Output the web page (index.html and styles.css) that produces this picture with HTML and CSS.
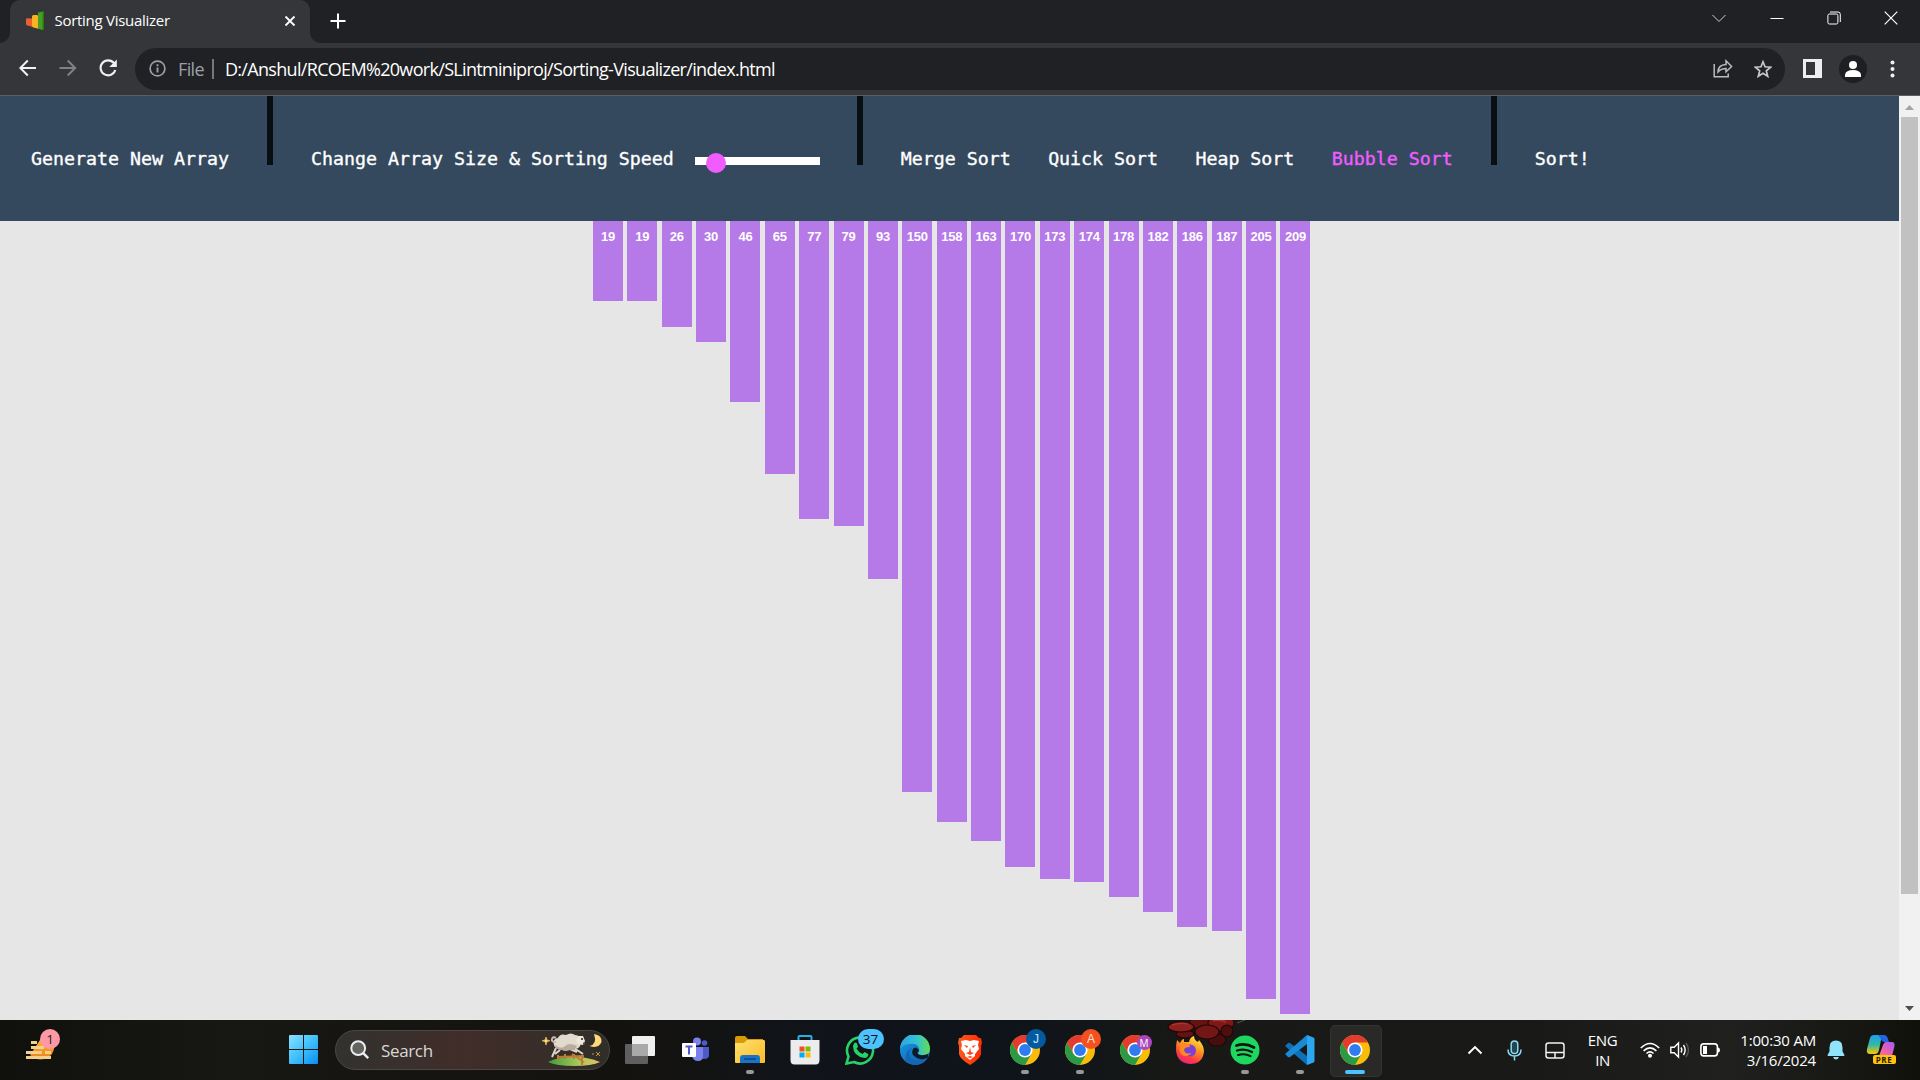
FILE: index.html
```html
<!DOCTYPE html>
<html lang="en">
<head>
<meta charset="utf-8">
<title>Sorting Visualizer</title>
<link rel="stylesheet" href="styles.css">
</head>
<body>
<svg class="defs" width="0" height="0" aria-hidden="true">
  <defs>
    <linearGradient id="win" x1="0" y1="0" x2="1" y2="1"><stop offset="0" stop-color="#8be0ff"/><stop offset=".5" stop-color="#3fc0fb"/><stop offset="1" stop-color="#0a8cf5"/></linearGradient>
    <linearGradient id="moon" x1="0" y1="0" x2="0" y2="1"><stop offset="0" stop-color="#ffc12e"/><stop offset="1" stop-color="#ee7d1b"/></linearGradient>
    <linearGradient id="hill" x1="0" x2="1"><stop offset="0" stop-color="#3f9b3c"/><stop offset=".6" stop-color="#a9c85a"/><stop offset="1" stop-color="#e3c06a"/></linearGradient>
    <linearGradient id="folder" x1="0" y1="0" x2="1" y2="1"><stop offset="0" stop-color="#ffdf70"/><stop offset="1" stop-color="#fbbc24"/></linearGradient>
    <linearGradient id="edgeA" x1="0" y1="0" x2="1" y2="0"><stop offset="0" stop-color="#2aa5e6"/><stop offset=".55" stop-color="#35c1d4"/><stop offset="1" stop-color="#62dc52"/></linearGradient>
    <linearGradient id="edgeB" x1="0" y1="0" x2="1" y2="1"><stop offset="0" stop-color="#1b9de2"/><stop offset="1" stop-color="#0f56a8"/></linearGradient>
    <linearGradient id="brave" x1="0" x2="1"><stop offset="0" stop-color="#ff5a1f"/><stop offset="1" stop-color="#ff2a00"/></linearGradient>
    <linearGradient id="fox" x1=".8" y1="0" x2=".3" y2="1"><stop offset="0" stop-color="#fff04a"/><stop offset=".4" stop-color="#ff9a1f"/><stop offset=".75" stop-color="#ff3d3d"/><stop offset="1" stop-color="#e81e8c"/></linearGradient>
    <linearGradient id="copA" x1="0" y1="0" x2="0" y2="1"><stop offset="0" stop-color="#1e9df5"/><stop offset=".5" stop-color="#2fb8a6"/><stop offset="1" stop-color="#ffc600"/></linearGradient>
    <linearGradient id="copB" x1="1" y1="0" x2="0" y2="1"><stop offset="0" stop-color="#a35df2"/><stop offset=".6" stop-color="#ea5fb3"/><stop offset="1" stop-color="#ff7d5c"/></linearGradient>
    <symbol id="chrome" viewBox="0 0 30 30">
      <circle cx="15" cy="15" r="15" fill="#fbbc09"/>
      <path d="M15 15 8.500 18.750 2.010 7.500A15 15 0 0 0 15 30L21.500 18.750Z" fill="#2a9a47"/>
      <path d="M15 15V7.500H28A15 15 0 0 0 2.010 7.500L8.500 18.750Z" fill="#e33b2e"/>
      <circle cx="15" cy="15" r="7.600" fill="#fff"/><circle cx="15" cy="15" r="5.900" fill="#2f7bf0"/>
    </symbol>
  </defs>
</svg>

<header class="tabstrip">
  <div class="tab">
    <svg class="favicon" width="20" height="20" viewBox="0 0 20 20"><path d="M1 8.500Q1 7 2.500 7.200L7 7.500v8.300l-4.500-1.300Q1 14 1 13z" fill="#ee5f2b"/><path d="M7 5.500Q7 4 8.500 4H12l1.500 1v12.800l-5-1.300Q7 16 7 15z" fill="#f9b223"/><path d="M13 1.500 18 .5q1 0 1 1V18l-1.500 1-4.500-1.500z" fill="#42a11e"/><path d="M17.500 1 19 1.500V18l-1.500 1z" fill="#2b7a10"/></svg>
    <span class="tab-title">Sorting Visualizer</span>
    <svg class="tab-close" width="12" height="12" viewBox="0 0 12 12"><path d="M1.500 1.500l9 9m0-9l-9 9" stroke="#fff" stroke-width="1.800"/></svg>
  </div>
  <svg class="new-tab" width="16" height="16" viewBox="0 0 16 16"><path d="M8 .5v15M.5 8h15" stroke="#fff" stroke-width="2"/></svg>
  <div class="window-buttons">
    <svg width="14" height="14" viewBox="0 0 14 14"><path d="M.5 4 7 10.500 13.500 4" fill="none" stroke="#cfcfcf"/></svg>
    <svg width="14" height="14" viewBox="0 0 14 14"><path d="M.5 7.500h13" stroke="#fff"/></svg>
    <svg width="14" height="14" viewBox="0 0 14 14" fill="none" stroke="#fff"><rect x=".9" y="3" width="10" height="10" rx="1.500"/><path d="M3 1h8q2.300 0 2.300 2.300V11"/></svg>
    <svg width="14" height="14" viewBox="0 0 14 14"><path d="M.7.7l12.600 12.600m0-12.600L.7 13.300" stroke="#fff" stroke-width="1.200"/></svg>
  </div>
</header>

<div class="toolbar">
  <div class="nav-icons">
    <svg width="18" height="18" viewBox="0 0 18 18" fill="none" stroke="#f0f1f3" stroke-width="2"><path d="M17 9H1.500M8.800 1.500 1.300 9l7.500 7.500"/></svg>
    <svg width="18" height="18" viewBox="0 0 18 18" fill="none" stroke="#808185" stroke-width="2"><path d="M.5 9H16M8.700 1.500 16.200 9l-7.500 7.500"/></svg>
    <svg width="18" height="18" viewBox="0 0 18 18"><path d="M15 4.200A7.500 7.500 0 1 0 16.300 11" fill="none" stroke="#f0f1f3" stroke-width="2.100"/><path d="M17.800.5V8h-7.500z" fill="#f0f1f3"/></svg>
  </div>
  <div class="omnibox">
    <svg width="17" height="17" viewBox="0 0 17 17"><circle cx="8.500" cy="8.500" r="7.400" fill="none" stroke="#9aa0a6" stroke-width="1.700"/><path d="M8.500 7.500v5M8.500 4.300v2" stroke="#9aa0a6" stroke-width="1.900"/></svg>
    <span class="scheme">File</span>
    <span class="omni-sep"></span>
    <span class="url">D:/Anshul/RCOEM%20work/SLintminiproj/Sorting-Visualizer/index.html</span>
    <svg class="share" width="20" height="19" viewBox="0 0 20 19" fill="none" stroke="#b9bbbe" stroke-width="1.500"><path d="M1.200 5v12.800h14V14.500"/><path d="M5 13q0-7 8-7.500V1.800L18.600 7.500 13 12.800V9.500Q8 9.500 5 13z"/></svg>
    <svg width="18" height="18" viewBox="0 0 18 18"><path d="M9 1.800 11 6.800l5.600.4-4.300 3.600 1.400 5.500L9 13.300l-4.700 3 1.400-5.500L1.400 7.200 7 6.800z" fill="none" stroke="#c6c8ca" stroke-width="1.700"/></svg>
  </div>
  <svg class="side-panel" width="19" height="19" viewBox="0 0 19 19"><path fill="#eceef0" d="M0 0h19v19H0zM3 3v13h9V3z" fill-rule="evenodd"/></svg>
  <svg class="avatar" width="28" height="28" viewBox="0 0 28 28"><circle cx="14" cy="14" r="14" fill="#1e1f22"/><circle cx="14" cy="10" r="4" fill="#fff"/><path d="M6 22v-2.500q1-4.500 8-4.500t8 4.500V22z" fill="#fff"/></svg>
  <svg class="kebab" width="5" height="18" viewBox="0 0 5 18" fill="#f0f1f3"><circle cx="2.500" cy="2.500" r="2"/><circle cx="2.500" cy="9" r="2"/><circle cx="2.500" cy="15.500" r="2"/></svg>
</div>

<div class="viewport">
  <main class="page">
    <nav class="navbar">
      <span class="nav-item">Generate New Array</span>
      <span class="divider"></span>
      <span class="nav-item">Change Array Size &amp; Sorting Speed</span>
      <div class="slider"><span class="thumb"></span></div>
      <span class="divider"></span>
      <div class="algorithms">
        <span class="nav-item">Merge Sort</span>
        <span class="nav-item">Quick Sort</span>
        <span class="nav-item">Heap Sort</span>
        <span class="nav-item selected">Bubble Sort</span>
      </div>
      <span class="divider"></span>
      <span class="nav-item">Sort!</span>
    </nav>
    <div class="bars">
      <div class="bar" style="--v:19">19</div>
      <div class="bar" style="--v:19">19</div>
      <div class="bar" style="--v:26">26</div>
      <div class="bar" style="--v:30">30</div>
      <div class="bar" style="--v:46">46</div>
      <div class="bar" style="--v:65">65</div>
      <div class="bar" style="--v:77">77</div>
      <div class="bar" style="--v:79">79</div>
      <div class="bar" style="--v:93">93</div>
      <div class="bar" style="--v:150">150</div>
      <div class="bar" style="--v:158">158</div>
      <div class="bar" style="--v:163">163</div>
      <div class="bar" style="--v:170">170</div>
      <div class="bar" style="--v:173">173</div>
      <div class="bar" style="--v:174">174</div>
      <div class="bar" style="--v:178">178</div>
      <div class="bar" style="--v:182">182</div>
      <div class="bar" style="--v:186">186</div>
      <div class="bar" style="--v:187">187</div>
      <div class="bar" style="--v:205">205</div>
      <div class="bar" style="--v:209">209</div>
    </div>
  </main>
  <aside class="scrollbar">
    <svg width="21" height="21" viewBox="0 0 21 21"><path d="M6 14l4.500-5 4.500 5z" fill="#a3a3a3"/></svg>
    <span class="scroll-thumb"></span>
    <svg width="21" height="21" viewBox="0 0 21 21"><path d="M6 7l4.500 5L15 7z" fill="#505050"/></svg>
  </aside>
</div>

<footer class="taskbar">
  <div class="weather">
    <svg width="34" height="36" viewBox="0 0 34 36"><path d="M16 8q8-2 12 3 2 12-5 17-10 6-19-2z" fill="url(#moon)"/><path d="M5 13.500h6M5 18.500h13M0 23.500h16M19 23.500h6M0 28.500h25" stroke="#f0d28c" stroke-width="2.800"/></svg>
    <span class="badge badge-pink">1</span>
  </div>
  <svg class="start" width="30" height="30" viewBox="0 0 30 30" fill="url(#win)"><path d="M0 1q0-1 1-1h13v14H0zM15 0h13q1 0 1 1v13H15zM0 15h14v14H1q-1 0-1-1zM15 15h14v13q0 1-1 1H15z"/></svg>
  <div class="search">
    <svg width="20" height="20" viewBox="0 0 20 20"><circle cx="8.200" cy="8.200" r="6.900" fill="#63635f" stroke="#e9eef2" stroke-width="2"/><path d="M13.200 13.200l5 5" stroke="#e9eef2" stroke-width="2.500"/></svg>
    <span>Search</span>
    <svg class="sheep" width="60" height="34" viewBox="0 0 60 34">
      <path d="M6 29q24-11 52 0-8 4-26 4T6 29z" fill="url(#hill)"/>
      <path d="M16 27v-5M23 26v-5M32 26v-5M40 32v-9M16 24l26-1M30 21l12 8" stroke="#c07a37" stroke-width="2"/>
      <path d="M14 15l-4 9M18 17l-5 4M32 15l9 6M28 16l7 3" stroke="#ded5ca" stroke-width="2"/>
      <path d="M12 12q-2-6 4-7 2-5 8-3 5-3 9 0 6 0 6 6 0 9-8 8-5 2-9 0-9 1-10-4z" fill="#e3dace"/>
      <path d="M13 12q6 5 10 1t12 0q-2 5-7 4-5 2-8 0-6 0-7-5z" fill="#b9ac9e"/>
      <path d="M34 7l3-4 4 0 2 5-2 4-5-1z" fill="#efe7dc"/><path d="M39 6h2M41 10.500h2" stroke="#57514c" stroke-width="2"/>
      <path d="M14 9q-5 0-4-3t4-1" fill="none" stroke="#c8beb2" stroke-width="2"/>
      <path d="M52 1q8 1 7.500 8-3 7-12 4 8-2 4.500-12z" fill="#ffd878"/>
      <path d="M4 4l1 3 3 .7-3 1L4 12 3 8.700 0 7.700 3 7zM54 19l4 4m0-4l-4 4M50 21h2" fill="#ffe18a" stroke="#e0b54a" stroke-width=".8"/>
    </svg>
  </div>
  <div class="apps">
    <div class="app"><svg width="30" height="28" viewBox="0 0 30 28"><rect x="7" y="0" width="23" height="20" rx="1" fill="#efefef"/><rect x="0" y="8" width="23" height="20" rx="1" fill="#666" fill-opacity=".92"/><path d="M7 8h16v12H7z" fill="#a9a9a9"/></svg></div>
    <div class="app"><svg width="30" height="26" viewBox="0 0 30 26"><circle cx="24.500" cy="6" r="2.800" fill="#5059c9"/><path d="M20 10h9v8q0 4-5 4h-4z" fill="#5059c9"/><circle cx="17" cy="4.500" r="4" fill="#7b83eb"/><path d="M12 10h11v9q0 5-5 5t-6-5z" fill="#7b83eb"/><rect x="2" y="6" width="14" height="14" rx="1" fill="#fff"/><path d="M5.500 9.500h7M9 9.500v8" stroke="#5059c9" stroke-width="2"/></svg></div>
    <div class="app running"><svg width="30" height="28" viewBox="0 0 30 28"><path d="M0 2q0-2 2-2h8l3 3h15v8H0z" fill="#d99a08"/><path d="M0 7h8q2 0 4-3h17q1 0 1 1.500V26q0 1-1 1H1q-1 0-1-1z" fill="url(#folder)"/><path d="M5 27v-5q0-3 3-3h14q3 0 3 3v5z" fill="#1974c8"/><path d="M9 23h12" stroke="#0c4586" stroke-width="1.500"/></svg></div>
    <div class="app"><svg width="30" height="30" viewBox="0 0 30 30"><path d="M8.500 7V2q0-1 1-1h11q1 0 1 1v5" fill="none" stroke="#29aee3" stroke-width="2"/><path d="M.5 5h29v20q0 4.500-4 4.500h-21q-4 0-4-4.500z" fill="#ececef"/><path d="M9.500 11.500h5v5h-5z" fill="#f1511b"/><path d="M15.500 11.500h5v5h-5z" fill="#80bb01"/><path d="M9.500 17.500h5v5h-5z" fill="#00adef"/><path d="M15.500 17.500h5v5h-5z" fill="#fbbc09"/></svg></div>
    <div class="app"><svg width="30" height="30" viewBox="0 0 30 30"><path d="M1.500 28.500l2-7A13 13 0 1 1 9 27z" fill="none" stroke="#25d366" stroke-width="2.600"/><path d="M9 8.500q1.500-2 3 0l1 3q0 1-1.500 2 2 4 6 5.500l2-2q3 1 4 2.500-1 3.500-4 3.500Q8 21 8 11z" fill="#25d366"/></svg><span class="badge badge-blue">37</span></div>
    <div class="app"><svg width="30" height="30" viewBox="0 0 30 30"><circle cx="15" cy="15" r="15" fill="url(#edgeB)"/><path d="M0 14A15 15 0 0 1 30 14q0 6-7 6-5 0-5-2 2-2 1-5-2-5-9-4-7 0-10 5z" fill="url(#edgeA)"/><path d="M12 13q-5 5-1 10 5 6 16 1-5 6-12 6-11-1-9-10 1-5 6-7z" fill="#1366b6"/><path d="M28 22.500q-6 3-11 .5-7-3-4-9 2-3 5 0 2 2-1 4 3 4 11 1z" fill="#0f1a29"/></svg></div>
    <div class="app"><svg width="26" height="30" viewBox="0 0 26 30"><path d="M7 0h12l3 3h2l1 5-1 3v8q-1 5-11 11Q3 24 2 19V11L1 8l1-5h2z" fill="url(#brave)"/><path d="M4 6l5-1 4 1 4-1 5 1-1 4 1 4-4 5v2l-5 4-5-4v-2l-4-5 1-4z" fill="#fff"/><path d="M7 10l4 1-1 2zM19 10l-4 1 1 2zM13 12l1 5 3 1-4 2-4-2 3-1zM10 22l3-1 3 1-3 1z" fill="#ff4315"/></svg></div>
    <div class="app running"><svg width="30" height="30"><use href="#chrome"/></svg><span class="badge badge-j">J</span></div>
    <div class="app running"><svg width="30" height="30"><use href="#chrome"/></svg><span class="badge badge-a">A</span></div>
    <div class="app"><svg width="30" height="30"><use href="#chrome"/></svg><span class="badge badge-m">M</span></div>
    <div class="app">
      <svg class="dragon" width="86" height="28" viewBox="0 0 86 28"><g fill="#641313" stroke="#240707" stroke-width="1.200"><ellipse cx="50" cy="20" rx="9" ry="6" fill="#4a0d0d"/><ellipse cx="34" cy="3" rx="12" ry="6"/><ellipse cx="54" cy="3" rx="13" ry="8" fill="#7c1818"/><ellipse cx="40" cy="12" rx="12" ry="7" fill="#731616"/><ellipse cx="60" cy="11" rx="6" ry="6" fill="#4d0e0e"/><ellipse cx="18" cy="14" rx="9" ry="4"/><ellipse cx="14" cy="7" rx="13" ry="5" fill="#8f2020"/></g><path d="M5 5q8-3 16-1M46 1q6-2 13 1" stroke="#c0392f" stroke-width="1.500" fill="none" opacity=".7"/><path d="M70 3l8-3" stroke="#555"/></svg>
      <svg class="fox" width="30" height="30" viewBox="0 0 30 30"><path d="M2 5l3 3q2-4 4-4v3h5q1-5 5-6 0 4 4 6l1-2q5 6 5 11Q28 29 15 29 2 28 1 15q0-6 1-10z" fill="url(#fox)"/><circle cx="15" cy="15.500" r="6" fill="#7a41d8"/><path d="M5 9q5-2 9 0l1 3q-6 0-6 3 1 5 8 3-5 5-10 2-4-4-2-11z" fill="#ff8a24"/></svg>
    </div>
    <div class="app running"><svg width="30" height="30" viewBox="0 0 30 30"><circle cx="15" cy="15" r="14.500" fill="#1ed760"/><g fill="none" stroke="#0b1710" stroke-linecap="round"><path d="M6.500 10.500q9-3 17.500 2" stroke-width="2.800"/><path d="M7 15.500q8-2.500 15 1.500" stroke-width="2.300"/><path d="M8 20q7-2 12.500 1.200" stroke-width="2"/></g></svg></div>
    <div class="app running"><svg width="30" height="30" viewBox="0 0 30 30"><path d="M.5 10.500l2.500-2.500q1-.7 2 0L22 21v9L.5 11.500z" fill="#0d70b8"/><path d="M.5 19.500L3 22q1 .7 2 0L22 9V0L.5 18.500z" fill="#1a8ad6"/><path d="M22 0l6.500 2.500q1 .5 1 1.500v22q0 1-1 1.500L22 30z" fill="#2ba7f0"/></svg></div>
    <div class="app active"><svg width="30" height="30"><use href="#chrome"/></svg></div>
  </div>
  <div class="tray">
    <svg class="chevron" width="16" height="10" viewBox="0 0 16 10"><path d="M1.500 8.500 8 2l6.500 6.500" fill="none" stroke="#fff" stroke-width="1.900"/></svg>
    <svg class="mic" width="15" height="21" viewBox="0 0 15 21" fill="none" stroke="#8bdcf5" stroke-width="1.500"><rect x="4.200" y="1" width="6.600" height="12.500" rx="3.300" fill="#244650"/><path d="M1 9.500q0 6.500 6.500 6.500T14 9.500M7.500 16v4.500"/></svg>
    <svg class="touchpad" width="20" height="17" viewBox="0 0 20 17" fill="none" stroke="#f2f2f2" stroke-width="1.500"><rect x="1" y="1" width="18" height="15" rx="2.500"/><path d="M1 10.500h18M10 10.500V16"/></svg>
    <div class="language"><span>ENG</span><span>IN</span></div>
    <svg class="wifi" width="20" height="16" viewBox="0 0 20 16" fill="none" stroke="#fff" stroke-width="1.600"><path d="M.8 6Q10-3 19.200 6M3.600 8.800q6.400-6 12.800 0M6.500 11.500q3.500-3.200 7 0"/><circle cx="10" cy="13.700" r="1.200" fill="#fff"/></svg>
    <svg class="volume" width="20" height="18" viewBox="0 0 20 18" fill="none" stroke="#fff" stroke-width="1.400"><path d="M.8 6.300h3.400L8.500 2v14l-4.300-4.300H.8zM11 6.500q1.700 2.500 0 5M13.500 4q3.300 5 0 10"/><path d="M16 2q5 7 0 14" stroke="#555"/></svg>
    <svg class="battery" width="21" height="14" viewBox="0 0 21 14"><rect x=".9" y=".9" width="16.500" height="12" rx="2.800" fill="none" stroke="#fff" stroke-width="1.600"/><path d="M3 3h4v8H3zM18 4.500q2 0 2 2.500t-2 2.500z" fill="#fff"/></svg>
    <div class="clock"><span>1:00:30 AM</span><span>3/16/2024</span></div>
    <svg class="bell" width="18" height="20" viewBox="0 0 18 20" fill="#8fe3fb"><path d="M9 .5q6.500 0 6.500 7v4L17.500 15q0 1-1 1h-15q-1 0-1-1l2-3.500v-4q0-7 6.500-7zM6 17h6q-1 2.500-3 2.500T6 17z"/></svg>
    <div class="copilot">
      <svg width="30" height="24" viewBox="0 0 30 24"><path d="M8 0h8l-3 15q-1 4-4 4H4q-4 0-3-5L4 3q1-3 4-3z" fill="url(#copA)"/><path d="M12 0h6q3 0 4 4l1 3h-5q-2 0-3-3z" fill="#2463e4"/><path d="M20 7h6q3 0 2.500 4L26 21H13l4-11q1-3 3-3z" fill="url(#copB)"/></svg>
      <span class="pre">PRE</span>
    </div>
  </div>
</footer>
</body>
</html>
```

FILE: styles.css
```css
* { box-sizing: border-box; }

body {
  margin: 0;
  width: 1920px;
  height: 1080px;
  overflow: hidden;
  display: flex;
  flex-direction: column;
  font-family: "Open Sans", "Noto Sans", sans-serif;
  background: #202124;
}

svg { display: block; flex: none; }
.defs { position: absolute; }

/* Browser tab strip */
.tabstrip {
  height: 43px;
  display: flex;
  align-items: flex-start;
  padding-left: 10px;
  background: #202124;
}
.tab {
  position: relative;
  width: 300px;
  height: 43px;
  display: flex;
  align-items: center;
  padding: 0 14px 2px 15px;
  border-radius: 10px 10px 0 0;
  background: #35363a;
  color: #fff;
}
.tab::before, .tab::after {
  content: "";
  position: absolute;
  bottom: 0;
  width: 10px;
  height: 10px;
}
.tab::before { left: -10px; background: radial-gradient(circle at 0 0, transparent 9.500px, #35363a 10px); }
.tab::after { right: -10px; background: radial-gradient(circle at 100% 0, transparent 9.500px, #35363a 10px); }
.tab-title { margin: -1px 0 0 9.500px; font-size: 15px; letter-spacing: -0.280px; white-space: nowrap; }
.tab-close { margin-left: auto; }
.new-tab { margin: 13px 0 0 19.500px; }
.window-buttons { margin: 11px 22px 0 auto; display: flex; gap: 43.200px; }

/* Browser toolbar */
.toolbar {
  height: 53px;
  display: flex;
  align-items: center;
  padding: 0 25px 1px 19px;
  background: #35363a;
  border-bottom: 1px solid #5c5d60;
}
.nav-icons { display: flex; gap: 22px; padding-bottom: 1px; }
.omnibox {
  width: 1650px;
  height: 42px;
  margin-left: 18px;
  padding: 0 13px 0 14px;
  display: flex;
  align-items: center;
  border-radius: 21px;
  background: #202124;
  font-size: 18px;
}
.scheme { margin-left: 12px; color: #9aa0a6; letter-spacing: -0.650px; }
.omni-sep { width: 2px; height: 20px; margin: 0 11px 0 8px; background: #75777b; }
.url { color: #fff; letter-spacing: -0.680px; white-space: nowrap; }
.share { margin: 0 21px 0 auto; }
.side-panel { margin-left: 18px; }
.avatar { margin-left: 17px; }
.kebab { margin-left: auto; }

/* Page area */
.viewport { height: 924px; display: flex; }
.page { width: 1899px; background: #e6e6e6; }
.navbar {
  height: 125px;
  display: flex;
  align-items: flex-start;
  padding-left: 31px;
  background: #34495e;
  font: 18.270px/24px "DejaVu Sans Mono", monospace;
  -webkit-text-stroke: .350px;
  color: #fff;
}
.nav-item { padding-top: 51px; white-space: pre; }
.selected { color: #f15cff; }
.divider { width: 6px; height: 69px; margin: 0 38px; background: #090e12; }
.slider { position: relative; width: 125px; height: 8px; margin: 61px -1px 0 21px; background: #fff; }
.thumb { position: absolute; left: 11px; top: -4px; width: 20px; height: 20px; border-radius: 50%; background: #f15cff; }
.algorithms { display: flex; gap: 37.300px; }

.bars { display: flex; align-items: flex-start; gap: 4.375px; padding-left: 592.950px; }
.bar {
  width: 30px;
  height: calc(var(--v) * 3.750px + 8.750px);
  padding-top: 8px;
  flex: none;
  background: #b579e8;
  color: #fff;
  font: bold 13px/16px "Liberation Sans", Arial, sans-serif;
  letter-spacing: -0.200px;
  text-align: center;
}

.scrollbar { width: 21px; background: #f1f1f1; display: flex; flex-direction: column; }
.scroll-thumb { width: 17px; height: 777px; margin: 0 auto auto 2px; background: #c1c1c1; }

/* Desktop taskbar */
.taskbar {
  height: 60px;
  display: flex;
  align-items: center;
  color: #fff;
  background: linear-gradient(90deg, #10100d 0, #171714 12%, #14120e 32%, #10141a 43%, #0f141a 53%, #181916 62%, #191a17 80%, #20211f 90%, #11110c 100%);
}
.badge {
  position: absolute;
  display: flex;
  align-items: center;
  justify-content: center;
  width: 20px;
  height: 20px;
  border-radius: 10px;
  font-size: 13.500px;
}
.weather { position: relative; width: 36px; height: 36px; margin-left: 26px; }
.weather svg { margin-top: -3px; }
.badge-pink { left: 14px; top: -3px; background: #ff98a6; color: #222; }
.start { margin-left: 227px; }
.search {
  width: 275px;
  height: 40px;
  margin-left: 16px;
  padding: 0 7px 0 14px;
  display: flex;
  align-items: center;
  border: 1px solid #4a4845;
  border-radius: 20px;
  background: linear-gradient(90deg, #32322f, #412d29 48%, #302e29);
  font-size: 17px;
  letter-spacing: -0.350px;
  color: #d9d7d5;
}
.search span { margin-left: 11px; }
.sheep { margin-left: auto; }
.apps { display: flex; margin-left: 2.500px; }
.app {
  position: relative;
  width: 55px;
  height: 60px;
  display: flex;
  align-items: center;
  justify-content: center;
}
.running::after, .active::after {
  content: "";
  position: absolute;
  left: 23.500px;
  bottom: 6px;
  width: 8px;
  height: 4px;
  border-radius: 2px;
  background: #989896;
}
.active::before {
  content: "";
  position: absolute;
  left: 2.500px;
  top: 5px;
  width: 50px;
  height: 50px;
  border-radius: 5px;
  border: 1px solid #343431;
  background: #292a27;
}
.active svg { position: relative; }
.active::after { left: 17.500px; width: 20px; background: #4cc2ff; }
.badge-blue { left: 25px; top: 9px; width: 26px; background: #4cc2ff; color: #111; }
.badge-j, .badge-a { left: 28.500px; top: 9px; font: 12px "Liberation Sans", sans-serif; }
.badge-j { background: #045aa0; color: #cfe2f2; }
.badge-a { background: #f4511e; color: #ffe1d6; }
.badge-m { left: 29px; top: 15px; width: 15px; height: 15px; background: #aa47bc; font-size: 10px; }
.dragon { position: absolute; left: 4px; top: 0; }
.fox { position: relative; }

.tray { display: flex; align-items: center; margin-left: 84px; font-size: 15px; line-height: 20px; }
.mic { margin-left: 24.500px; }
.touchpad { margin-left: 22.500px; }
.language { width: 50px; margin-left: 13px; display: flex; flex-direction: column; align-items: center; letter-spacing: -0.400px; }
.wifi { margin-left: 12px; }
.volume { margin-left: 10px; }
.battery { margin-left: 10px; }
.clock { width: 86px; margin-left: 9.500px; display: flex; flex-direction: column; align-items: flex-end; letter-spacing: -0.200px; white-space: nowrap; }
.bell { margin-left: 10.500px; }
.copilot { position: relative; width: 30px; height: 30px; margin-left: 21px; }
.pre {
  position: absolute;
  left: 7px;
  top: 20px;
  width: 23px;
  height: 9px;
  border-radius: 2px;
  background: #ffc20e;
  color: #241c00;
  font: bold 8px/9px "Open Sans", sans-serif;
  letter-spacing: .500px;
  text-align: center;
}
```
